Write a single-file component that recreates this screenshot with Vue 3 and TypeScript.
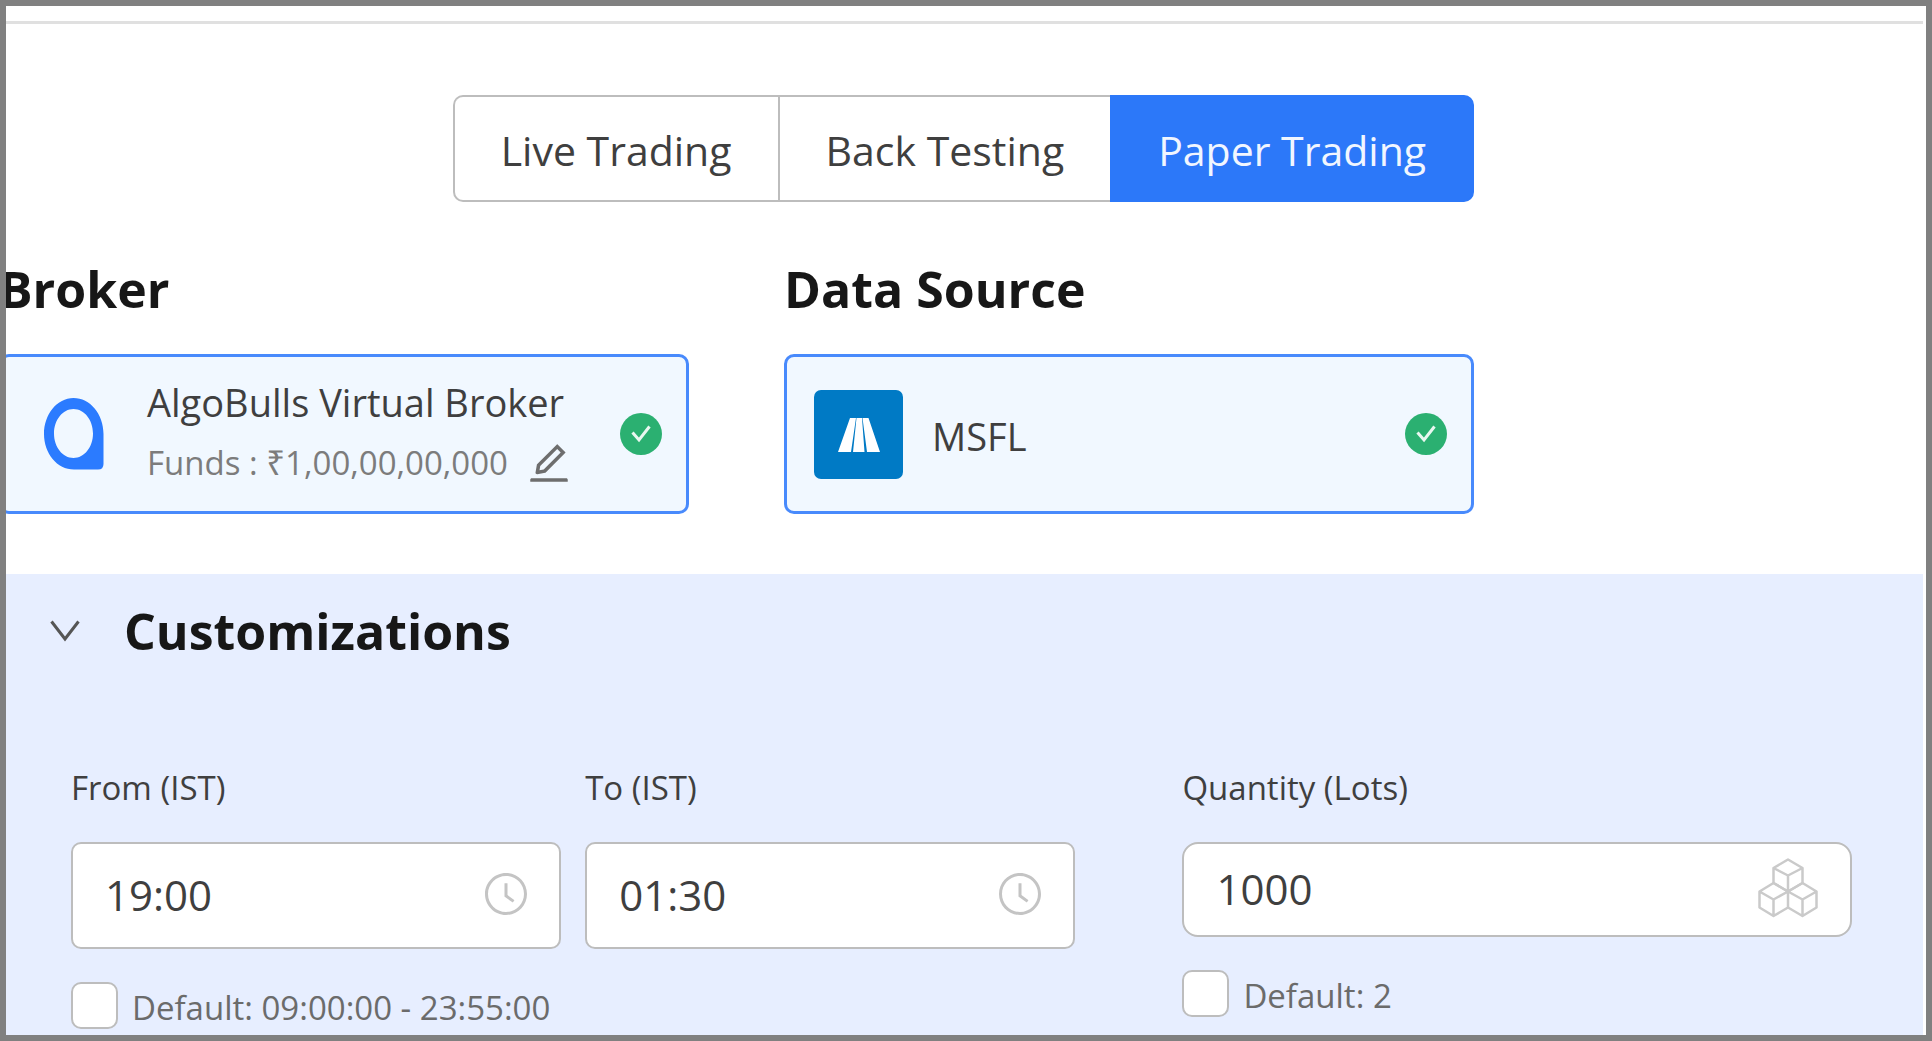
<script setup lang="ts">
import { ref } from 'vue'

const modes: string[] = ['Live Trading', 'Back Testing', 'Paper Trading']
const activeMode = ref<string>('Paper Trading')
const fromTime = ref<string>('19:00')
const toTime = ref<string>('01:30')
const quantity = ref<string>('1000')
const defaultTime = ref<boolean>(false)
const defaultQuantity = ref<boolean>(false)
const open = ref<boolean>(true)
</script>

<template>
  <main class="frame">
    <hr class="rule" />

    <div class="setup">
      <div class="modes" role="group" aria-label="Trading mode">
        <button
          v-for="mode in modes"
          :key="mode"
          type="button"
          class="mode"
          :class="{ active: mode === activeMode }"
          :aria-pressed="mode === activeMode"
          @click="activeMode = mode"
        >{{ mode }}</button>
      </div>

      <div class="sources">
        <section>
          <h2 class="title">Broker</h2>
          <div class="card">
            <span class="logo">
              <svg width="60" height="72" viewBox="0 0 60 72" aria-hidden="true">
                <path fill="#2b7bff" fill-rule="evenodd" d="M29.500 0C46 0 59.500 16 59.500 36V66Q59.500 71.500 54 71.500H30C13 71.500 0 55.500 0 36S13 0 29.500 0ZM29.500 11C18.700 11 10 22 10 35.500S18.700 60 29.500 60 49 49 49 35.500 40.300 11 29.500 11Z" />
              </svg>
            </span>
            <div class="details">
              <span class="name">AlgoBulls Virtual Broker</span>
              <span class="funds">
                Funds : ₹1,00,00,00,000
                <button type="button" class="plain edit" aria-label="Edit funds">
                  <svg width="42" height="42" viewBox="64 64 896 896" aria-hidden="true">
                    <path fill="#6e6e6e" d="M257.700 752c2 0 4-.2 6-.5L431.900 722c2-.4 3.900-1.300 5.300-2.800l423.900-423.900a9.960 9.960 0 000-14.100L694.900 114.900c-1.900-1.900-4.400-2.900-7.100-2.900s-5.200 1-7.100 2.900L256.800 538.800c-1.500 1.500-2.400 3.300-2.800 5.300l-29.500 168.200a33.500 33.500 0 009.400 29.800c6.600 6.400 14.900 9.900 23.800 9.900zm67.400-174.400L687.800 215l73.300 73.300-362.700 362.600-88.900 15.700 15.600-89zM880 836H144c-17.700 0-32 14.300-32 32v36c0 4.400 3.600 8 8 8h784c4.400 0 8-3.600 8-8v-36c0-17.700-14.300-32-32-32z" />
                  </svg>
                </button>
              </span>
            </div>
            <svg class="check" width="42" height="42" viewBox="0 0 42 42" aria-hidden="true">
              <circle cx="21" cy="21" r="21" fill="#2bb071" />
              <path d="M12.500 19.500L19 27L29.500 13.500" fill="none" stroke="#e9f7f0" stroke-width="3" />
            </svg>
          </div>
        </section>

        <section>
          <h2 class="title">Data Source</h2>
          <div class="card">
            <span class="logo">
              <svg width="89" height="89" viewBox="0 0 89 89" aria-hidden="true">
                <rect width="89" height="89" rx="7" fill="#007ac5" />
                <path fill="#ffffff" d="M36 28H42L37 62H24ZM42.500 28H48L50.500 62H39ZM48.500 28H54.500L66 62H53Z" />
              </svg>
            </span>
            <div class="details">
              <span class="name">MSFL</span>
            </div>
            <svg class="check" width="42" height="42" viewBox="0 0 42 42" aria-hidden="true">
              <circle cx="21" cy="21" r="21" fill="#2bb071" />
              <path d="M12.500 19.500L19 27L29.500 13.500" fill="none" stroke="#e9f7f0" stroke-width="3" />
            </svg>
          </div>
        </section>
      </div>
    </div>

    <section class="custom">
      <h2 class="title">
        <button type="button" class="plain toggle" :aria-expanded="open" @click="open = !open">
          <svg width="30" height="22" viewBox="0 0 30 22" aria-hidden="true">
            <path d="M1.500 1.500L15 19L28.500 1.500" fill="none" stroke="#555555" stroke-width="3" />
          </svg>
          Customizations
        </button>
      </h2>

      <div v-show="open" class="fields">
        <div>
          <div class="times">
            <div>
              <label class="label" for="from">From (IST)</label>
              <div class="box">
                <input id="from" v-model="fromTime" type="text" />
                <svg width="42" height="42" viewBox="64 64 896 896" fill="#c4c4c4" aria-hidden="true">
                  <path d="M512 64C264.600 64 64 264.600 64 512s200.600 448 448 448 448-200.600 448-448S759.400 64 512 64zm0 832c-212 0-384-172-384-384s172-384 384-384 384 172 384 384-172 384-384 384z" />
                  <path d="M686.700 638.600L544.100 535.500V288c0-4.400-3.600-8-8-8H488c-4.400 0-8 3.600-8 8v275.400c0 2.600 1.200 5 3.300 6.500l165.400 120.600c3.600 2.600 8.600 1.800 11.200-1.700l28.600-39c2.600-3.700 1.800-8.700-1.800-11.200z" />
                </svg>
              </div>
            </div>
            <div>
              <label class="label" for="to">To (IST)</label>
              <div class="box">
                <input id="to" v-model="toTime" type="text" />
                <svg width="42" height="42" viewBox="64 64 896 896" fill="#c4c4c4" aria-hidden="true">
                  <path d="M512 64C264.600 64 64 264.600 64 512s200.600 448 448 448 448-200.600 448-448S759.400 64 512 64zm0 832c-212 0-384-172-384-384s172-384 384-384 384 172 384 384-172 384-384 384z" />
                  <path d="M686.700 638.600L544.100 535.500V288c0-4.400-3.600-8-8-8H488c-4.400 0-8 3.600-8 8v275.400c0 2.600 1.200 5 3.300 6.500l165.400 120.600c3.600 2.600 8.600 1.800 11.200-1.700l28.600-39c2.600-3.700 1.800-8.700-1.800-11.200z" />
                </svg>
              </div>
            </div>
          </div>
          <label class="default">
            <input v-model="defaultTime" type="checkbox" />
            <span>Default: 09:00:00 - 23:55:00</span>
          </label>
        </div>

        <div>
          <label class="label" for="quantity">Quantity (Lots)</label>
          <div class="box lots">
            <input id="quantity" v-model="quantity" type="text" inputmode="numeric" />
            <svg width="60" height="60" viewBox="0 0 60 60" fill="none" stroke="#cacaca" stroke-width="2.500" stroke-linejoin="round" aria-hidden="true">
              <path d="M30 1.500L44.500 10L30 17.500L15.500 10ZM15.500 10V25L30 33.500L44.500 25V10M30 17.500V33.500" />
              <path d="M15.500 25L30 33.500L15.500 41.500L1.500 33.500ZM1.500 33.500V49.500L15.500 58L30 49.500V33.500M15.500 41.500V58" />
              <path d="M44.500 25L58.500 33.500L44.500 41.500L30 33.500ZM30 49.500L44.500 58L58.500 49.500V33.500M44.500 41.500V58" />
            </svg>
          </div>
          <label class="default">
            <input v-model="defaultQuantity" type="checkbox" />
            <span>Default: 2</span>
          </label>
        </div>
      </div>
    </section>
  </main>
</template>

<style>
body {
  margin: 0;
}
</style>

<style scoped>
* {
  box-sizing: border-box;
}

.frame {
  display: flex;
  flex-direction: column;
  min-height: 100vh;
  padding-right: 3px;
  overflow: hidden;
  border: 6px solid #808080;
  background: #ffffff;
  color: #3f3f3f;
  font-family: "Open Sans", "Noto Sans", sans-serif;
  font-size: 33px;
}

.rule {
  width: 100%;
  height: 3px;
  margin: 15px 0 0;
  border: 0;
  background: #e0e0e0;
}

/* The broker panel runs under the left edge of the frame. */
.setup {
  width: calc(77% - 1px);
  margin: 71px 0 60px -7px;
}

.modes {
  display: flex;
  justify-content: flex-end;
}

.mode {
  height: 107px;
  padding: 2px 46px 0;
  border: 2px solid #bdbdbd;
  border-right-width: 0;
  background: #ffffff;
  color: #3f3f3f;
  font-family: inherit;
  font-size: 41px;
}

.mode:first-child {
  border-radius: 10px 0 0 10px;
}

.mode:last-child {
  border-right-width: 2px;
  border-radius: 0 10px 10px 0;
}

.mode.active {
  border-color: #2c78f9;
  background: #2c78f9;
  color: #f1f6ff;
}

.title {
  margin: 0;
  color: #171717;
  font-size: 50px;
  font-weight: 700;
  line-height: 70px;
}

.sources {
  display: grid;
  grid-template-columns: 1fr 1fr;
  gap: 95px;
  margin-top: 52px;
}

.card {
  display: flex;
  align-items: center;
  height: 160px;
  margin-top: 30px;
  padding: 0 24px 0 27px;
  border: 3px solid #488afc;
  border-radius: 10px;
  background: #f1f8ff;
}

.logo {
  display: flex;
  flex: none;
  justify-content: center;
  width: 89px;
}

.details {
  display: flex;
  flex: 1;
  flex-direction: column;
  margin-left: 29px;
  padding-top: 3px;
  white-space: nowrap;
}

.name {
  font-size: 38px;
  line-height: 54px;
}

.funds {
  display: flex;
  align-items: center;
  gap: 20px;
  color: #7c7c7c;
  line-height: 68px;
}

.check {
  flex: none;
}

.plain {
  padding: 0;
  border: 0;
  background: none;
  color: inherit;
  font: inherit;
}

.edit {
  display: flex;
}

.custom {
  flex: 1;
  padding: 22px 71px 0 65px;
  background: #e7eeff;
}

.toggle {
  display: flex;
  align-items: center;
  gap: 44px;
  margin-left: -21px;
}

.fields {
  display: grid;
  grid-template-columns: minmax(0, 3fr) minmax(0, 2fr);
  gap: 107px;
  margin-top: 98px;
}

.times {
  display: grid;
  grid-template-columns: minmax(0, 1fr) minmax(0, 1fr);
  gap: 24px;
}

.label {
  display: block;
  margin-bottom: 30px;
  line-height: 48px;
}

.box {
  display: flex;
  align-items: center;
  height: 107px;
  padding: 0 32px 3px;
  border: 2px solid #bdbdbd;
  border-radius: 10px;
  background: #ffffff;
}

.box input {
  flex: 1;
  min-width: 0;
  padding: 0;
  border: 0;
  outline: 0;
  background: none;
  color: #3f3f3f;
  font-family: inherit;
  font-size: 42px;
}

.box svg {
  flex: none;
}

.lots {
  height: 95px;
  border-radius: 16px;
}

.default {
  display: flex;
  align-items: flex-start;
  gap: 14px;
  margin-top: 33px;
  color: #6b6b6b;
  line-height: 52px;
}

.default input {
  appearance: none;
  width: 47px;
  height: 47px;
  margin: 0;
  border: 2px solid #bdbdbd;
  border-radius: 10px;
  background: #ffffff;
}

.default input:checked {
  background: #2c78f9;
}
</style>
